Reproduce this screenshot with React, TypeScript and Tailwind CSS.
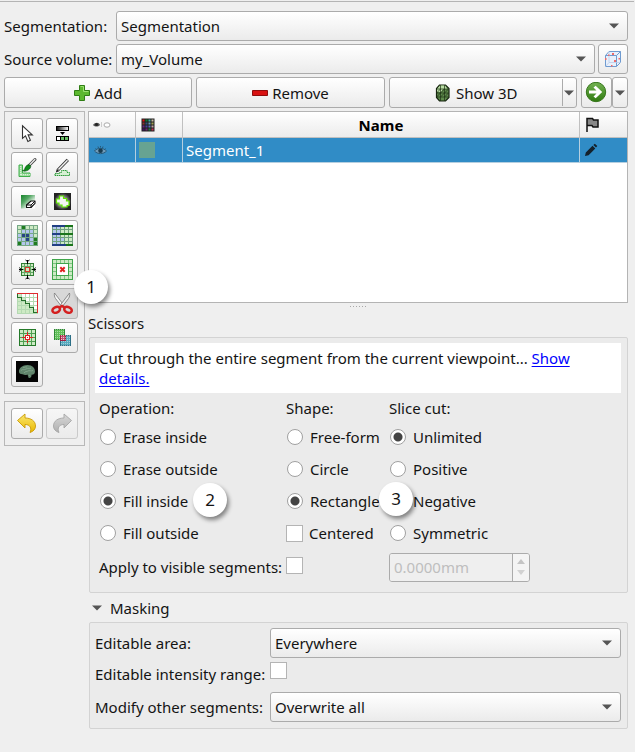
import React, { useState } from "react";

const FONT = "font-['Noto_Sans','Open_Sans',sans-serif]";
const RAISED = "border border-[#ababab] rounded-[3px] bg-linear-to-b from-white to-[#ebebeb]";

function Arrow({ className = "" }: { className?: string }) {
  return (
    <svg className={className} width="10" height="6" viewBox="0 0 10 6" aria-hidden="true">
      <path d="M0 0.5h10L5 5.5z" fill="#555" />
    </svg>
  );
}

function Combo({ id, options, label }: { id: string; options: string[]; label?: string }) {
  return (
    <div className="relative min-w-0 flex-1">
      <select
        id={id}
        aria-label={label}
        className={`block h-[30px] w-full appearance-none pr-6 pl-1 text-[15px] leading-5 text-[#141414] ${RAISED}`}
      >
        {options.map((o) => (
          <option key={o}>{o}</option>
        ))}
      </select>
      <Arrow className="pointer-events-none absolute top-3 right-[9px]" />
    </div>
  );
}

function Callout({ n, place }: { n: number; place: string }) {
  return (
    <span
      className={`pointer-events-none absolute z-10 flex size-[34px] items-center justify-center rounded-full bg-white text-[17px] text-[#141414] shadow-[2px_3px_4px_rgba(0,0,0,0.45)] ${place}`}
    >
      {n}
    </span>
  );
}

function Icon({ children, crisp = false }: { children: React.ReactNode; crisp?: boolean }) {
  return (
    <svg width="22" height="21" viewBox="0 0 22 21" shapeRendering={crisp ? "crispEdges" : undefined} aria-hidden="true">
      {children}
    </svg>
  );
}

/* Draws a square of coloured cells; each character of a row picks a colour. */
const CELLS: Record<string, string> = {
  g: "#cdeac4",
  G: "#1f7d1f",
  b: "#b4c6ee",
  B: "#274585",
  w: "#ffffff",
};

function Cells({ x, y, size, rows, line }: { x: number; y: number; size: number; rows: string[]; line: string }) {
  const total = size * rows.length + 1;
  return (
    <>
      <rect x={x} y={y} width={total} height={total} fill={line} />
      {rows.map((r, j) =>
        r.split("").map((c, i) => (
          <rect key={`${i}-${j}`} x={x + 1 + i * size} y={y + 1 + j * size} width={size - 1} height={size - 1} fill={CELLS[c]} />
        )),
      )}
    </>
  );
}

const tools: { name: string; icon: React.ReactNode }[] = [
  {
    name: "None",
    icon: (
      <Icon>
        <path d="M6.5 2.8v12.6l3-2.6 2.4 5.6 2.5-1.1-2.3-5.4h4.2z" fill="#fff" stroke="#333" strokeWidth="1.1" />
      </Icon>
    ),
  },
  {
    name: "Threshold",
    icon: (
      <Icon>
        <defs>
          <linearGradient id="thr">
            <stop offset="0" stopColor="#111" />
            <stop offset="1" stopColor="#fff" />
          </linearGradient>
        </defs>
        <rect x="5.5" y="3.5" width="12" height="4" fill="url(#thr)" stroke="#000" />
        <path d="M9 9h5l-2.5 3z" fill="#000" />
        <rect x="5.5" y="13.5" width="12" height="4" fill="#fff" stroke="#000" />
        <rect x="10" y="14" width="7" height="3" fill="#6cc068" />
        <path d="M9.5 13v5M13.5 13v5" stroke="#000" />
      </Icon>
    ),
  },
  {
    name: "Paint",
    icon: (
      <Icon>
        <path d="M3 8h3.500v8h7.500v3.500H3z" fill="#9fdc9f" stroke="#3fae4a" />
        <path d="M4.700 9v9M5 17.700h9" stroke="#e6f8e4" strokeDasharray="1 1" />
        <path d="M13 8.500L19 2.500" stroke="#444" strokeWidth="3" strokeLinecap="round" />
        <path d="M13.500 8L18.800 2.600" stroke="#e6e6e6" strokeWidth="1.400" strokeLinecap="round" />
        <path d="M6.500 13.500c2.500.2 2-2.200 3.300-4 1.200-1.600 3.500-2.300 4.500-1.200 1.100 1.400-.2 3.600-2.100 4.700-1.800 1-3.900 1.700-5.700.5z" fill="#0f8a1b" stroke="#0b5313" strokeWidth=".7" />
      </Icon>
    ),
  },
  {
    name: "Draw",
    icon: (
      <Icon>
        <path d="M4 18.500v-2h4.500v-1h2v-2h5.500v2h2.500v3z" fill="#d7f0d4" stroke="#2a9a38" strokeDasharray="1.500 .6" />
        <path d="M7 13L16.800 2.800" stroke="#333" strokeWidth="3.200" />
        <path d="M7.500 12.500L16.500 3.200" stroke="#f2f2f2" strokeWidth="1.500" />
        <path d="M4.800 15.500l1-3.500 2.400 2.200z" fill="#222" />
      </Icon>
    ),
  },
  {
    name: "Erase",
    icon: (
      <Icon>
        <defs>
          <linearGradient id="era" x2="1" y2="1">
            <stop offset="0" stopColor="#17842b" />
            <stop offset=".35" stopColor="#52a662" />
            <stop offset=".75" stopColor="#fff" />
          </linearGradient>
        </defs>
        <rect x="5" y="4" width="14" height="13.500" fill="url(#era)" />
        <path d="M10.500 14l4.500-4h4v2.300L15 16.500h-4.500z" fill="#fff" stroke="#111" strokeWidth="1.100" strokeLinejoin="round" />
        <path d="M10.500 14H15l4-4M15 14v2.500" stroke="#111" fill="none" />
      </Icon>
    ),
  },
  {
    name: "Grow from selection",
    icon: (
      <Icon>
        <defs>
          <radialGradient id="isl">
            <stop offset=".5" stopColor="#999" />
            <stop offset=".85" stopColor="#444" />
            <stop offset="1" stopColor="#222" />
          </radialGradient>
        </defs>
        <rect x="3" y="2" width="17" height="17" fill="url(#isl)" />
        <path d="M8.500 8V5h4v2.500h3V10H18v4.500h-2V16h-5v-2H8v-2H5.500V8z" fill="#f4f4f4" stroke="#5fe600" strokeWidth="1.200" />
      </Icon>
    ),
  },
  {
    name: "Grow from seeds",
    icon: (
      <Icon crisp>
        <Cells x={1} y={0} size={4} line="#76a886" rows={["gGggg", "gbbbg", "bBBbg", "bbBbG", "GbbbG"]} />
      </Icon>
    ),
  },
  {
    name: "Fill between slices",
    icon: (
      <Icon crisp>
        <Cells x={1} y={0} size={4} line="#6d9f7c" rows={["bbggg", "bbggg", "bbggg", "bbbgg", "bbggg"]} />
        <path d="M1 0h13v2H1zM1 8h8v2H1zM1 19h14v2H1z" fill="#213f85" />
        <path d="M14 0h8v2h-8zM9 8h13v2H9zM15 19h7v2h-7z" fill="#1b751b" />
      </Icon>
    ),
  },
  {
    name: "Margin",
    icon: (
      <Icon crisp>
        <Cells x={5} y={4} size={3} line="#65a866" rows={["gggg", "gggg", "gggg", "gggg"]} />
        <rect x="5.500" y="4.500" width="12" height="12" fill="none" stroke="#2e7d32" />
        <rect x="9.500" y="8.500" width="4" height="4" fill="#cdeac4" stroke="#d8382c" />
        <g shapeRendering="auto" stroke="#000" strokeWidth="1" fill="none">
          <path d="M9.500 1l2 1.500 2-1.500M11.500 1v4M9.500 20l2-1.500 2 1.500M11.500 16v4M3.500 8.500L5 10.500 3.500 12.500M3 10.500h4M19.500 8.500L18 10.500l1.500 2M16 10.500h4" />
        </g>
      </Icon>
    ),
  },
  {
    name: "Hollow",
    icon: (
      <Icon crisp>
        <Cells x={1} y={0} size={4} line="#7cc482" rows={["ggggg", "gwwwg", "gwwwg", "gwwwg", "ggggg"]} />
        <rect x="1.500" y=".5" width="20" height="20" fill="none" stroke="#3fa54a" />
        <rect x="5.500" y="4.500" width="12" height="12" fill="#fff" stroke="#3fa54a" />
        <path shapeRendering="auto" d="M9.300 8.300l4.400 4.400M13.700 8.300l-4.400 4.400" stroke="#e02020" strokeWidth="2" />
      </Icon>
    ),
  },
  {
    name: "Smoothing",
    icon: (
      <Icon crisp>
        <Cells x={1} y={0} size={4} line="#b4d9b2" rows={["gwwww", "ggwww", "gggww", "ggggw", "ggggg"]} />
        <path d="M1 .5h20.500V20" fill="none" stroke="#df2c30" />
        <path d="M1.500 1v3.500h4v3h4v3h4v4h4v5h3.500" fill="none" stroke="#25702b" />
      </Icon>
    ),
  },
  {
    name: "Scissors",
    icon: (
      <Icon>
        <path d="M3.500 0c-.5 2 0 4 1 5.500L11 14l2-1.500z" fill="#f6f6f6" stroke="#777" strokeWidth=".8" />
        <path d="M18.500 0c.5 2 0 4-1 5.500L11 14l-2-1.500z" fill="#e9e9e9" stroke="#777" strokeWidth=".8" />
        <g fill="none" stroke="#d42020" strokeWidth="2.500">
          <ellipse cx="5.200" cy="16.800" rx="3.900" ry="2.800" transform="rotate(-25 5.200 16.800)" />
          <ellipse cx="17" cy="16.800" rx="3.900" ry="2.800" transform="rotate(25 17 16.800)" />
          <path d="M8.500 14.500l2.500-1.500 2.500 1.500" />
        </g>
      </Icon>
    ),
  },
  {
    name: "Islands",
    icon: (
      <Icon crisp>
        <Cells x={3} y={2} size={4} line="#4f9f52" rows={["gggg", "gggg", "gggg", "gggg"]} />
        <rect x="3.500" y="2.500" width="16" height="16" fill="none" stroke="#257a2a" />
        <path d="M11.500 5v11M6 10.500h11" stroke="#e02020" />
        <rect x="9.500" y="8.500" width="4" height="4" fill="#fff" stroke="#e02020" />
        <rect x="11" y="10" width="1" height="1" fill="#e02020" />
      </Icon>
    ),
  },
  {
    name: "Logical operators",
    icon: (
      <Icon crisp>
        <defs>
          <pattern id="dots" width="2" height="2" patternUnits="userSpaceOnUse">
            <rect width="1" height="1" fill="#fff" fillOpacity=".45" />
          </pattern>
        </defs>
        <rect x="3.500" y="2.500" width="10" height="10" fill="#5fbf58" stroke="#2e8a33" />
        <rect x="9.500" y="8.500" width="10" height="10" fill="#58a9bd" stroke="#2c6f86" />
        <rect x="9" y="8" width="5" height="5" fill="#c05070" stroke="#a02040" />
        <rect x="3" y="2" width="11" height="11" fill="url(#dots)" />
        <rect x="9" y="8" width="11" height="11" fill="url(#dots)" />
      </Icon>
    ),
  },
  {
    name: "Mask volume",
    icon: (
      <Icon>
        <rect width="22" height="21" fill="#050505" />
        <path d="M3 11c-.3-4 3.500-7 8.500-7 5 0 7.500 3 7.500 6.500 0 2.300-1.700 3.500-3.500 3.300.3 2.200-1 3.700-2.800 3.200l-1.200-3.500c-2 1-3.500.5-4.700-.3C5 13.300 3.200 13 3 11z" fill="#61856c" />
        <path d="M5 9.500c2-2 3 0 5-1.500s3 .5 5-1M7 6.500c1.500.5 2-1 4-.5M8 12c1-2 3-1 4-2s3 .5 5-.5M13 14l1.500 1" stroke="#86a98f" fill="none" strokeWidth=".8" />
      </Icon>
    ),
  },
];

function ToolButton({ name, pressed, disabled, onClick, children }: { name: string; pressed?: boolean; disabled?: boolean; onClick?: () => void; children: React.ReactNode }) {
  return (
    <button
      type="button"
      aria-label={name}
      title={name}
      aria-pressed={pressed}
      disabled={disabled}
      onClick={onClick}
      className={`flex h-[31px] w-8 items-center justify-center rounded-[3px] border ${
        pressed ? "border-[#b5b5b5] bg-[#d8d8d8]" : disabled ? "border-[#cacaca] bg-linear-to-b from-[#f6f6f6] to-[#ebebeb]" : "border-[#ababab] bg-linear-to-b from-white to-[#ebebeb]"
      }`}
    >
      {children}
    </button>
  );
}

function CurvedArrow({ grey = false }: { grey?: boolean }) {
  const id = grey ? "redo" : "undo";
  return (
    <Icon>
      <defs>
        <linearGradient id={id} x2="0" y2="1">
          <stop offset="0" stopColor={grey ? "#d8d8d8" : "#fbe870"} />
          <stop offset="1" stopColor={grey ? "#b0b0b0" : "#e9b800"} />
        </linearGradient>
      </defs>
      <path
        transform={grey ? "translate(22 0) scale(-1 1)" : undefined}
        d="M1.500 7.500L9 1v4c6 0 10.500 3 10.500 8 0 3-2 5.500-5.500 6.500 2-4.500 0-8-5-8V15z"
        fill={`url(#${id})`}
        stroke={grey ? "#a6a6a6" : "#c99a06"}
        strokeWidth=".9"
        strokeLinejoin="round"
      />
    </Icon>
  );
}

const BOX = "appearance-none size-[17px] shrink-0 border border-[#b4b4b4] bg-white checked:bg-[#444]";

function Radio({ group, label, checked, children }: { group: string; label: string; checked?: boolean; children?: React.ReactNode }) {
  return (
    <label className="relative flex h-8 items-center gap-[7px] pl-px whitespace-nowrap">
      <input
        type="radio"
        name={group}
        defaultChecked={checked}
        className="size-4 shrink-0 appearance-none rounded-full border border-[#a0a0a0] bg-white checked:bg-[radial-gradient(circle,#444_0px,#444_4px,#fff_5px)]"
      />
      {label}
      {children}
    </label>
  );
}

function Eye() {
  return (
    <svg width="13" height="11" viewBox="0 0 13 11" aria-hidden="true">
      <path d="M.5 6C3 2.500 9.500 2.500 12.500 6 9.500 9.500 3.500 9.500.5 6z" fill="#6f9bb8" stroke="#285a7a" />
      <circle cx="6.500" cy="5.800" r="2.300" fill="#173b50" />
      <path d="M1.500 3.500l1 1M4 1.500l.5 1.500M6.500 1v1.500M9 1.500L8.500 3M11.500 3.500l-1 1" stroke="#285a7a" />
    </svg>
  );
}

const PALETTE = [
  "#e01010", "#107a30", "#40b0a0", "#c8b8a0",
  "#903030", "#30507a", "#70a0c0", "#a0a050",
  "#6a2080", "#4040a0", "#6070c0", "#c0a0a0",
  "#401060", "#702070", "#208040", "#c03050",
];

export default function App() {
  const [active, setActive] = useState("Scissors");
  return (
    <div className={`min-h-screen bg-[#efefef] pt-px text-[15px] leading-5 text-[#141414] ${FONT}`}>
      <div className="mr-px h-px bg-[#b4b4b4]" />
      <div className="pt-[9px] pr-[7px] pb-6 pl-1">
        <div className="grid grid-cols-[112px_1fr] items-center gap-y-[3px]">
          <label htmlFor="segmentation">Segmentation:</label>
          <Combo id="segmentation" options={["Segmentation"]} />
          <label htmlFor="volume">Source volume:</label>
          <div className="flex gap-[3px]">
            <Combo id="volume" options={["my_Volume"]} />
            <button type="button" aria-label="Source geometry" className={`flex size-[30px] items-center justify-center ${RAISED}`}>
              <svg width="18" height="18" viewBox="0 0 18 18" fill="none" aria-hidden="true">
                <path d="M2 5.500L5.500 2H16v10.500L13 16H2z" fill="#e9f0fb" />
                <path d="M1.500 5.500h11v11h-11zM1.500 5.500L5 1.500h11.500l-4 4M16.500 1.500v11l-4 4" stroke="#6f9bd0" />
                <path d="M5 1.500v11h11.500M1.500 16.500l3.500-4" stroke="#b9cdea" strokeWidth=".8" />
                <path d="M8 3h2v2H8zM4 4.500h1.500V6H4zM10 10h2v2h-2zM1 8h1.500v2H1zM14.500 8H16v1.500h-1.500zM7 15h1.500v1.500H7z" fill="#ef6a6a" />
              </svg>
            </button>
          </div>
        </div>

        <div className="mt-[3px] flex h-[31px] gap-1">
          <button type="button" className={`flex flex-1 items-center justify-center gap-1 ${RAISED}`}>
            <svg width="16" height="16" viewBox="0 0 16 16" aria-hidden="true">
              <path d="M5.500.5h5v5h5v5h-5v5h-5v-5h-5v-5h5z" fill="#5cb82f" stroke="#2f7d14" />
              <path d="M6.500 1.500h3v5h5" stroke="#9be070" fill="none" />
            </svg>
            Add
          </button>
          <button type="button" className={`flex flex-1 items-center justify-center gap-1 ${RAISED}`}>
            <svg width="16" height="6" viewBox="0 0 16 6" aria-hidden="true">
              <path d="M.5.5h15v5H.5z" fill="#d91212" stroke="#8f0d0d" />
            </svg>
            Remove
          </button>
          <div className={`flex flex-1 ${RAISED}`}>
            <button type="button" className="flex flex-1 items-center justify-center gap-1">
              <svg width="18" height="18" viewBox="0 0 18 18" aria-hidden="true">
                <path d="M5.500 1h6L15 4.500v9L11.500 17h-6L2.500 13.500v-9z" fill="#5f8a4c" stroke="#16240f" strokeWidth="1.200" />
                <path d="M6 1.500h5L13.500 5H9L7 8H3V5z" fill="#b9dca4" />
                <path d="M2.500 5h12M2.500 9h12M2.500 13h12M6.500 1v16M10.500 1v16M2.500 9l4-4M6.500 9l4-4M10.500 9l4-4M2.500 13l4-4M6.500 13l4-4M10.500 13l4-4" stroke="#1c3014" strokeWidth=".7" />
              </svg>
              Show 3D
            </button>
            <button type="button" aria-label="Show 3D options" className="my-px flex w-[14px] items-center justify-center border-l border-[#ababab]">
              <Arrow className="shrink-0" />
            </button>
          </div>
          <div className="flex">
            <button type="button" aria-label="Go to segmentations" className={`flex w-[31px] items-center justify-center ${RAISED}`}>
              <svg width="22" height="22" viewBox="0 0 22 22" aria-hidden="true">
                <defs>
                  <linearGradient id="go" x2="0" y2="1">
                    <stop offset="0" stopColor="#74b353" />
                    <stop offset="1" stopColor="#2f7a10" />
                  </linearGradient>
                </defs>
                <circle cx="11" cy="10" r="9.700" fill="url(#go)" stroke="#37761c" />
                <path d="M4 8.500h7.500L8.500 5.500l2.200-1.700 6.500 6.200-6.500 6.200L8.500 14.500l3-3H4z" fill="#fff" />
              </svg>
            </button>
            <button type="button" aria-label="More" className={`flex w-4 items-center justify-center ${RAISED}`}>
              <Arrow className="shrink-0" />
            </button>
          </div>
        </div>

        <div className="mt-[3px] flex items-start gap-[3px]">
          <div className="flex flex-col gap-[7px]">
            <div className="grid grid-cols-2 gap-[3px] border border-[#b8b8b8] p-1.5">
              {tools.map((t) => (
                <div key={t.name} className="relative">
                  <ToolButton name={t.name} pressed={active === t.name} onClick={() => setActive(t.name)}>
                    {t.icon}
                  </ToolButton>
                  {t.name === "Scissors" && <Callout n={1} place="-top-[18px] left-7" />}
                </div>
              ))}
            </div>
            <div className="grid grid-cols-2 gap-[3px] border border-[#b8b8b8] p-1.5">
              <ToolButton name="Undo">
                <CurvedArrow />
              </ToolButton>
              <ToolButton name="Redo" disabled>
                <CurvedArrow grey />
              </ToolButton>
            </div>
          </div>

          <div className="min-w-0 flex-1">
            <div className="h-48 border border-[#b4b4b4] bg-white">
              <table className="w-full table-fixed border-separate border-spacing-0">
                <thead>
                  <tr className="h-[26px] bg-linear-to-b from-white to-[#ebebeb] *:border-b *:border-[#c0c0c0] *:p-0">
                    <th className="w-[47px] border-r" aria-label="Visibility">
                      <svg className="ml-1" width="18" height="9" viewBox="0 0 18 9" aria-hidden="true">
                        <path d="M0 5c2-3 6-3 7 0-2 2-5 2-7 0z" fill="#555" />
                        <circle cx="3.500" cy="4.500" r="1.500" fill="#222" />
                        <path d="M8.500 2v5" stroke="#ccc" />
                        <ellipse cx="14" cy="5" rx="3" ry="2.200" fill="#fff" stroke="#aaa" />
                      </svg>
                    </th>
                    <th className="w-[47px] border-r" aria-label="Color">
                      <svg className="ml-[5px]" width="14" height="14" viewBox="0 0 14 14" aria-hidden="true">
                        <rect x=".5" y=".5" width="13" height="13" fill="#222" />
                        {PALETTE.map((c, i) => (
                          <rect key={i} x={1.5 + (i % 4) * 3} y={1.5 + Math.floor(i / 4) * 3} width="2" height="2" fill={c} />
                        ))}
                      </svg>
                    </th>
                    <th className="border-r font-bold text-black">Name</th>
                    <th className="w-[47px]" aria-label="Status">
                      <svg className="ml-[5px]" width="15" height="15" viewBox="0 0 15 15" aria-hidden="true">
                        <path d="M2 15V1.500h5.500l1 1.500H13v7H8l-1-1.500H2" fill="#888" stroke="#111" strokeWidth="1.500" />
                      </svg>
                    </th>
                  </tr>
                </thead>
                <tbody>
                  <tr className="h-[25px] bg-[#308cc6] text-white *:border-b *:border-[#b5cfe0] *:p-0">
                    <td className="border-r">
                      <div className="ml-[5px]"><Eye /></div>
                    </td>
                    <td className="border-r">
                      <div className="ml-[3px] size-4 bg-[#67a392]" />
                    </td>
                    <td className="border-r"><div className="pl-[3px]">Segment_1</div></td>
                    <td>
                      <svg className="ml-1" width="14" height="14" viewBox="0 0 14 14" aria-hidden="true">
                        <path d="M1 13l.8-3.600 6.700-6.700 2.800 2.800-6.700 6.700zM9.300 2l1.500-1.300L13.300 3 12 4.600z" fill="#14212b" />
                      </svg>
                    </td>
                  </tr>
                </tbody>
              </table>
            </div>
            <div className="flex h-[7px] justify-center gap-0.5 pt-[3px]">
              {[0, 1, 2, 3, 4, 5].map((i) => (
                <span key={i} className="size-px bg-[#a8a8a8]" />
              ))}
            </div>
            <div className="mt-[3px] mb-1">Scissors</div>

            <section className="ml-px rounded-[2px] border border-[#d3d3d3] bg-[#ebebeb] pt-[5px] pr-1.5 pb-[7px] pl-[5px]">
              <p className="bg-white px-1 py-[5px]">
                Cut through the entire segment from the current viewpoint...{" "}
                <a href="#details" className="text-[#0000ff] underline underline-offset-2">Show details.</a>
              </p>
              <div className="mt-1 grid grid-cols-[187px_103px_1fr] pl-1">
                <div role="radiogroup" aria-label="Operation">
                  <div className="h-6 pt-px">Operation:</div>
                  <Radio group="operation" label="Erase inside" />
                  <Radio group="operation" label="Erase outside" />
                  <Radio group="operation" label="Fill inside" checked>
                    <Callout n={2} place="-top-0.5 left-[94px]" />
                  </Radio>
                  <Radio group="operation" label="Fill outside" />
                </div>
                <div role="radiogroup" aria-label="Shape">
                  <div className="h-6 pt-px">Shape:</div>
                  <Radio group="shape" label="Free-form" />
                  <Radio group="shape" label="Circle" />
                  <Radio group="shape" label="Rectangle" checked />
                  <label className="flex h-8 items-center gap-1.5">
                    <input type="checkbox" className={BOX} />
                    Centered
                  </label>
                </div>
                <div role="radiogroup" aria-label="Slice cut">
                  <div className="h-6 pt-px">Slice cut:</div>
                  <Radio group="slice" label="Unlimited" checked />
                  <Radio group="slice" label="Positive" />
                  <Radio group="slice" label="Negative">
                    <Callout n={3} place="-top-[3px] -left-2.5" />
                  </Radio>
                  <Radio group="slice" label="Symmetric" />
                </div>
                <label htmlFor="visible" className="flex h-9 items-center whitespace-nowrap">Apply to visible segments:</label>
                <div className="flex h-9 items-center pb-1">
                  <input id="visible" type="checkbox" className={BOX} />
                </div>
                <div className="flex h-9 items-center">
                  <div className="flex h-[29px] w-[141px] overflow-hidden rounded-[3px] border border-[#ababab]">
                    <input aria-label="Slice cut depth" type="text" disabled defaultValue="0.0000mm" className="min-w-0 flex-1 bg-[#efefef] pl-1 text-[#bebebe]" />
                    <div className="flex w-[17px] flex-col border-l border-[#ababab] bg-[#f4f4f4] py-0.5">
                      <button type="button" disabled aria-label="Increase" className="flex flex-1 items-center justify-center">
                        <svg width="8" height="5" viewBox="0 0 8 5" aria-hidden="true"><path d="M0 5h8L4 0z" fill="#c4c4c4" /></svg>
                      </button>
                      <button type="button" disabled aria-label="Decrease" className="flex flex-1 items-center justify-center">
                        <svg width="8" height="5" viewBox="0 0 8 5" aria-hidden="true"><path d="M0 0h8L4 5z" fill="#d2d2d2" /></svg>
                      </button>
                    </div>
                  </div>
                </div>
              </div>
            </section>

            <button type="button" aria-expanded="true" className="flex h-[29px] items-center gap-2 pl-1">
              <Arrow />
              Masking
            </button>

            <section className="ml-px grid grid-cols-[175px_1fr] items-center rounded-[2px] border border-[#d3d3d3] bg-[#ebebeb] pt-[5px] pr-1.5 pb-1.5 pl-[5px]">
              <label htmlFor="area">Editable area:</label>
              <Combo id="area" options={["Everywhere"]} />
              <label htmlFor="range" className="self-start pt-1.5 whitespace-nowrap">Editable intensity range:</label>
              <div className="flex h-[34px] items-start pt-1">
                <input id="range" type="checkbox" className={BOX} />
              </div>
              <label htmlFor="others" className="whitespace-nowrap">Modify other segments:</label>
              <Combo id="others" options={["Overwrite all"]} />
            </section>
          </div>
        </div>
      </div>
    </div>
  );
}
